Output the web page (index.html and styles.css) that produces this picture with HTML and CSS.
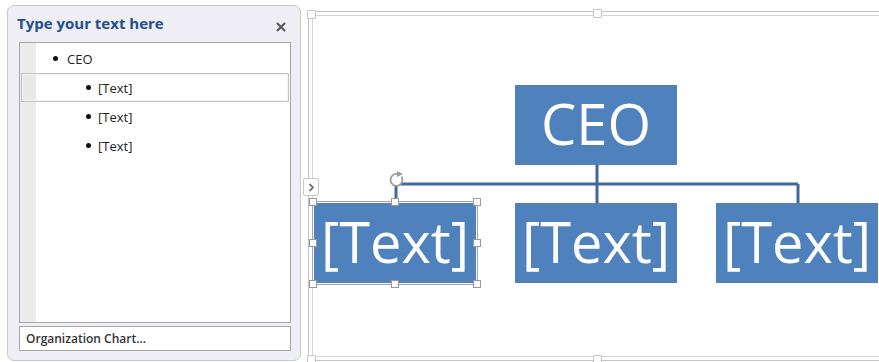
FILE: index.html
```html
<!DOCTYPE html>
<html lang="en">
<head>
  <meta charset="UTF-8" />
  <title>SmartArt - Organization Chart</title>
  <link rel="stylesheet" href="styles.css">
</head>
<body>

<aside class="text-pane">
  <div class="pane-head">
    <span class="pane-title">Type your text here</span>
    <svg class="pane-close" width="10" height="10" viewBox="0 0 10 10">
      <path d="M1 1 L9 9 M9 1 L1 9" stroke="#5a5a5a" stroke-width="2.2" />
    </svg>
  </div>

  <ul class="outline">
    <li class="lvl1"><span class="dot"></span>CEO</li>
    <li class="lvl2 current"><span class="dot"></span>[Text]</li>
    <li class="lvl2"><span class="dot"></span>[Text]</li>
    <li class="lvl2"><span class="dot"></span>[Text]</li>
  </ul>

  <div class="pane-foot">Organization Chart...</div>
</aside>

<section class="canvas">
  <span class="grip grip-tl"></span>
  <span class="grip grip-tm"></span>
  <span class="grip grip-bl"></span>
  <span class="grip grip-bm"></span>
  <span class="pane-tab">
    <svg width="7" height="9" viewBox="0 0 7 9"><path d="M1.5 1 L5 4.5 L1.5 8" fill="none" stroke="#777" stroke-width="1.8" /></svg>
  </span>

  <div class="chart">
    <div class="node node-top">CEO</div>

    <svg class="links" width="566" height="38" viewBox="0 0 566 38">
      <g stroke="#41689b" stroke-width="3" fill="none">
        <path d="M283 0 V19" />
        <path d="M81 19 H484" />
        <path d="M82 19 V38 M283 19 V38 M484 19 V38" />
      </g>
      <!-- rotate handle of the selected shape -->
      <path d="M87.5 11.5 A6 6 0 1 1 84 9" fill="#fff" stroke="#9c9c9c" stroke-width="1.8" />
      <path d="M83 6 L89 9 L83 12 Z" fill="#9c9c9c" />
    </svg>

    <div class="row">
      <div class="node selected">[Text]
        <span class="h h1"></span><span class="h h2"></span><span class="h h3"></span>
        <span class="h h4"></span><span class="h h5"></span><span class="h h6"></span>
        <span class="h h7"></span><span class="h h8"></span>
      </div>
      <div class="node">[Text]</div>
      <div class="node">[Text]</div>
    </div>
  </div>
</section>

</body>
</html>
```

FILE: styles.css
```css
body {
  margin: 0;
  width: 879px;
  height: 362px;
  overflow: hidden;
  background: #fff;
  font-family: "Open Sans", "Liberation Sans", sans-serif;
  color: #222;
  display: flex;
  align-items: flex-start;
}

/* text pane */
.text-pane {
  margin: 5px 0 0 7px;
  width: 294px;
  height: 356px;
  flex-shrink: 0;
  box-sizing: border-box;
  background: #eeeef4;
  border: 1px solid #c4c9d2;
  border-radius: 7px;
  display: flex;
  flex-direction: column;
  padding: 0 9px 9px 11px;
}
.pane-head {
  height: 36px;
  display: flex;
  align-items: center;
  justify-content: space-between;
}
.pane-title {
  margin-left: -2px;
  font-weight: bold;
  font-size: 15px;
  color: #1f4f8e;
  margin-top: -2px;
}
.pane-close {
  margin-right: 5px;
  margin-top: 6px;
}
.outline {
  list-style: none;
  margin: 0;
  padding: 1px 0 0;
  flex: 1;
  background: linear-gradient(to right, #ececec 16px, #fff 16px);
  border: 1px solid #a6a6a6;
}
.outline li {
  height: 29px;
  display: flex;
  align-items: center;
  font-size: 13px;
  box-sizing: border-box;
}
.lvl1 { padding-left: 33px; }
.lvl2 { padding-left: 66px; }
.outline .dot {
  width: 5px;
  height: 5px;
  border-radius: 50%;
  background: #111;
  margin-right: 9px;
}
.lvl2 .dot { margin-right: 7px; }
.outline li.current {
  margin: 0 1px;
  padding-left: 64px;
  border: 1px solid #c2c2c2;
  box-shadow: inset 0 0 0 1px #f2f2f2;
  background: linear-gradient(to right, #e8e8e8 14px, #fff 14px);
}
.pane-foot {
  margin-top: 3px;
  height: 25px;
  box-sizing: border-box;
  border: 1px solid #a6a6a6;
  background: #fff;
  font-size: 12px;
  font-weight: 600;
  color: #333;
  padding-left: 6px;
  display: flex;
  align-items: center;
}

/* drawing canvas */
.canvas {
  position: relative;
  margin: 11px 0 0 7px;
  width: 600px;
  height: 350px;
  box-sizing: border-box;
  border: 1px solid #c4c4c4;
  box-shadow: inset 0 0 0 3px #fff, inset 0 0 0 4px #d6d6d6;
  flex-shrink: 0;
}
.grip {
  position: absolute;
  width: 7px;
  height: 7px;
  background: #fff;
  border: 1px solid #c4c4c4;
  border-radius: 1px;
}
.grip-tl { left: -2px; top: -2px; }
.grip-tm { left: 284px; top: -3px; }
.grip-bl { left: -2px; top: 343px; }
.grip-bm { left: 284px; top: 343px; }
.pane-tab {
  position: absolute;
  left: -6px;
  top: 166px;
  width: 14px;
  height: 16px;
  background: #fff;
  border: 1px solid #c8c8c8;
  border-radius: 2px;
  display: flex;
  align-items: center;
  justify-content: center;
}

.chart {
  padding: 73px 0 0 5px;
}
.links {
  display: block;
}
.row {
  display: flex;
  gap: 39px;
}
.node {
  position: relative;
  width: 162px;
  height: 80px;
  box-sizing: border-box;
  padding-bottom: 4px;
  background: #4f81bd;
  color: #fff;
  font-size: 56px;
  display: flex;
  align-items: center;
  justify-content: center;
  flex-shrink: 0;
}
.node-top {
  margin-left: 201px;
}
.node.selected {
  outline: 1px solid #a4a4a4;
  outline-offset: 1px;
}
.h {
  position: absolute;
  width: 6px;
  height: 6px;
  background: #fff;
  border: 1px solid #9a9a9a;
}
.h1 { left: -5px; top: -5px; }
.h2 { left: 77px; top: -5px; }
.h3 { right: -5px; top: -5px; }
.h4 { right: -5px; top: 36px; }
.h5 { right: -5px; bottom: -5px; }
.h6 { left: 77px; bottom: -5px; }
.h7 { left: -5px; bottom: -5px; }
.h8 { left: -5px; top: 36px; }
```
